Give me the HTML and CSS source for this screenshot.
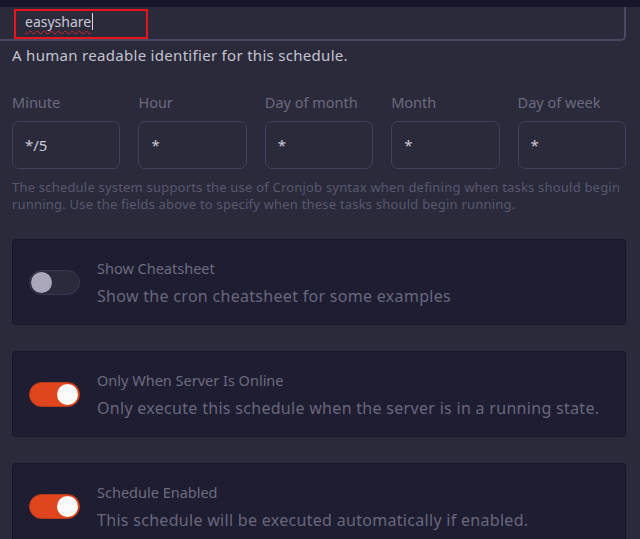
FILE: index.html
```html
<!DOCTYPE html>
<html lang="en">
<head>
<meta charset="utf-8">
<title>Schedule</title>
<link rel="stylesheet" href="styles.css">
</head>
<body>
<div class="topbar"></div>
<div class="page">
  <div class="name-field">
    <span class="name-value">easyshare</span><span class="caret"></span>
    <div class="annot"></div>
  </div>
  <p class="name-help">A human readable identifier for this schedule.</p>

  <div class="cron-grid">
    <div class="cron-col"><label class="cron-label">Minute</label><div class="cron-input">*/5</div></div>
    <div class="cron-col"><label class="cron-label">Hour</label><div class="cron-input">*</div></div>
    <div class="cron-col"><label class="cron-label">Day of month</label><div class="cron-input">*</div></div>
    <div class="cron-col"><label class="cron-label">Month</label><div class="cron-input">*</div></div>
    <div class="cron-col"><label class="cron-label">Day of week</label><div class="cron-input">*</div></div>
  </div>
  <p class="cron-help">The schedule system supports the use of Cronjob syntax when defining when tasks should begin running. Use the fields above to specify when these tasks should begin running.</p>

  <div class="card">
    <div class="toggle"><span class="knob"></span></div>
    <div class="card-text">
      <div class="card-title">Show Cheatsheet</div>
      <div class="card-desc">Show the cron cheatsheet for some examples</div>
    </div>
  </div>
  <div class="card">
    <div class="toggle on"><span class="knob"></span></div>
    <div class="card-text">
      <div class="card-title">Only When Server Is Online</div>
      <div class="card-desc">Only execute this schedule when the server is in a running state.</div>
    </div>
  </div>
  <div class="card">
    <div class="toggle on"><span class="knob"></span></div>
    <div class="card-text">
      <div class="card-title">Schedule Enabled</div>
      <div class="card-desc">This schedule will be executed automatically if enabled.</div>
    </div>
  </div>
</div>
</body>
</html>
```
FILE: styles.css
```css
* { box-sizing: border-box; }
html, body {
  margin: 0;
  padding: 0;
  background: #2b2a3b;
  overflow: hidden;
}
body {
  font-family: "Noto Sans", "Open Sans", sans-serif;
  color: #c6c5d2;
}
.topbar {
  height: 7px;
  background: #17162a;
}
.page {
  padding: 0 14px 0 12px;
}
.name-field {
  position: relative;
  height: 34px;
  margin-left: -12px;
  border-right: 2px solid #4b4962;
  border-bottom: 2px solid #4b4962;
  border-bottom-right-radius: 5px;
  display: flex;
  align-items: center;
  padding-left: 25px;
  padding-bottom: 3px;
}
.name-value {
  font-size: 14px;
  color: #c9c8d6;
  text-decoration: underline wavy #d0222c;
  text-decoration-thickness: 1px;
  text-underline-offset: 3px;
}
.caret {
  display: inline-block;
  width: 1px;
  height: 17px;
  background: #d8d8e2;
  margin-left: 1px;
}
.annot {
  position: absolute;
  left: 14px;
  top: 2px;
  width: 134px;
  height: 30px;
  border: 2px solid #e8141c;
}
.name-help {
  margin: 4px 0 0;
  font-size: 15px;
  letter-spacing: 0.3px;
  line-height: 20px;
  color: #c4c3d0;
}
.cron-grid {
  display: grid;
  grid-template-columns: repeat(5, 1fr);
  column-gap: 18px;
  margin-top: 27px;
}
.cron-col {
  display: flex;
  flex-direction: column;
}
.cron-label {
  font-size: 14.5px;
  line-height: 20px;
  color: #6b697e;
  margin-bottom: 9px;
}
.cron-input {
  height: 48px;
  border: 1px solid #42405a;
  border-radius: 7px;
  display: flex;
  align-items: center;
  padding-left: 12px;
  font-size: 15px;
  color: #c9c8d4;
}
.cron-help {
  margin: 10px 0 0;
  font-size: 13px;
  letter-spacing: 0.2px;
  line-height: 17px;
  color: #59576e;
}
.card {
  margin-top: 26px;
  height: 86px;
  background: #1f1d31;
  border: 1px solid #17152a;
  border-radius: 4px;
  display: flex;
  align-items: center;
  padding-left: 16px;
}
.cron-help + .card { margin-top: 26px; }
.toggle {
  width: 51px;
  height: 25px;
  border-radius: 13px;
  background: #2b2a3b;
  border: 1px solid #3a384f;
  position: relative;
  flex-shrink: 0;
}
.knob {
  position: absolute;
  left: 1px;
  top: 1px;
  width: 21px;
  height: 21px;
  border-radius: 50%;
  background: #aaa7bb;
}
.toggle.on {
  background: #e0461e;
  border-color: #b9391d;
}
.toggle.on .knob {
  left: auto;
  right: 1px;
  background: #fbfafa;
}
.card-text {
  margin-left: 17px;
  display: flex;
  flex-direction: column;
  gap: 8px;
}
.card-title {
  font-size: 14.5px;
  line-height: 20px;
  color: #6d6b80;
}
.card-desc {
  font-size: 16px;
  letter-spacing: 0.3px;
  line-height: 20px;
  color: #69677d;
}
```
